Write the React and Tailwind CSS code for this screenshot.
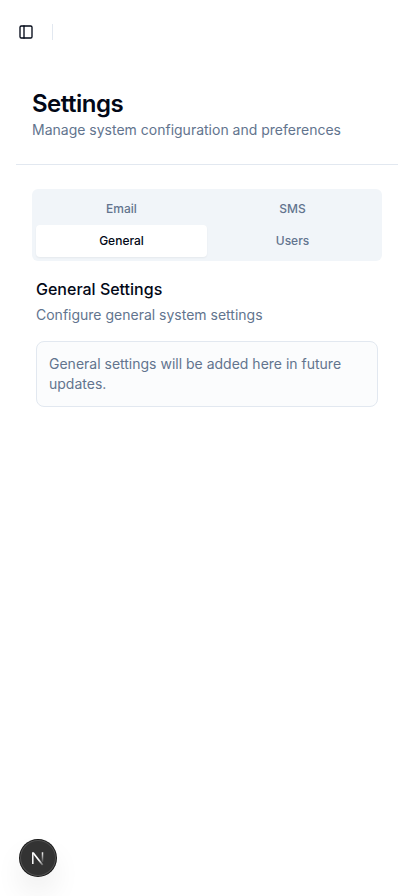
export default function App() {
  return (
    <div className="relative flex h-screen flex-col overflow-hidden bg-white font-['Inter',sans-serif] text-[#020817]">
      <header className="flex h-16 shrink-0 items-center px-4">
        <button className="-ml-1 flex size-7 items-center justify-center">
          <svg width="16" height="16" viewBox="0 0 24 24" fill="none" stroke="currentColor" strokeWidth="2" strokeLinecap="round" strokeLinejoin="round">
            <rect width="18" height="18" x="3" y="3" rx="2" />
            <path d="M9 3v18" />
          </svg>
        </button>
        <div className="ml-3 h-4 w-px bg-slate-200" />
      </header>
      <main className="flex flex-col px-4">
        <div className="flex flex-col border-b border-slate-200 px-4 pt-6 pb-6">
          <h1 className="text-2xl font-semibold tracking-[-0.5px]">Settings</h1>
          <p className="text-sm leading-5 text-slate-500">Manage system configuration and preferences</p>
        </div>
        <div className="px-4 pt-6">
          <div className="grid grid-cols-2 rounded-md bg-slate-100 p-1 text-xs font-medium text-slate-500">
            <button className="h-8">Email</button>
            <button className="h-8">SMS</button>
            <button className="h-8 rounded-sm bg-white text-[#020817] shadow-[0_1px_2px_0_rgba(0,0,0,0.05)]">General</button>
            <button className="h-8">Users</button>
          </div>
          <section className="px-1 pt-4">
            <h2 className="text-base font-medium">General Settings</h2>
            <p className="mt-1 text-sm text-slate-500">Configure general system settings</p>
            <div className="mt-4 rounded-lg border border-slate-200 bg-slate-50/50 p-3 text-sm text-slate-500">
              General settings will be added here in future updates.
            </div>
          </section>
        </div>
      </main>
      <button className="absolute bottom-5 left-5 flex size-9 items-center justify-center rounded-full bg-[#333] text-white shadow-[0_0_0_1px_#171717,inset_0_0_0_1px_rgba(255,255,255,0.14),0_16px_32px_-8px_rgba(0,0,0,0.24)]">
        <svg width="40" height="40" viewBox="0 0 40 40" fill="none" className="shrink-0">
          <defs>
            <linearGradient id="stem" x1="0" y1="14" x2="0" y2="25" gradientUnits="userSpaceOnUse">
              <stop stopColor="white" />
              <stop offset="1" stopColor="white" stopOpacity="0" />
            </linearGradient>
            <linearGradient id="diagonal" x1="21" y1="22" x2="26" y2="28.5" gradientUnits="userSpaceOnUse">
              <stop stopColor="white" />
              <stop offset="1" stopColor="white" stopOpacity="0" />
            </linearGradient>
          </defs>
          <path d="M15.1 14.8l9.6 12.2" stroke="url(#diagonal)" strokeWidth="1.7" />
          <path d="M14.8 26V14.3" stroke="white" strokeWidth="1.5" />
          <path d="M24.5 14.3v9.7" stroke="url(#stem)" strokeWidth="1.5" />
        </svg>
      </button>
    </div>
  );
}
